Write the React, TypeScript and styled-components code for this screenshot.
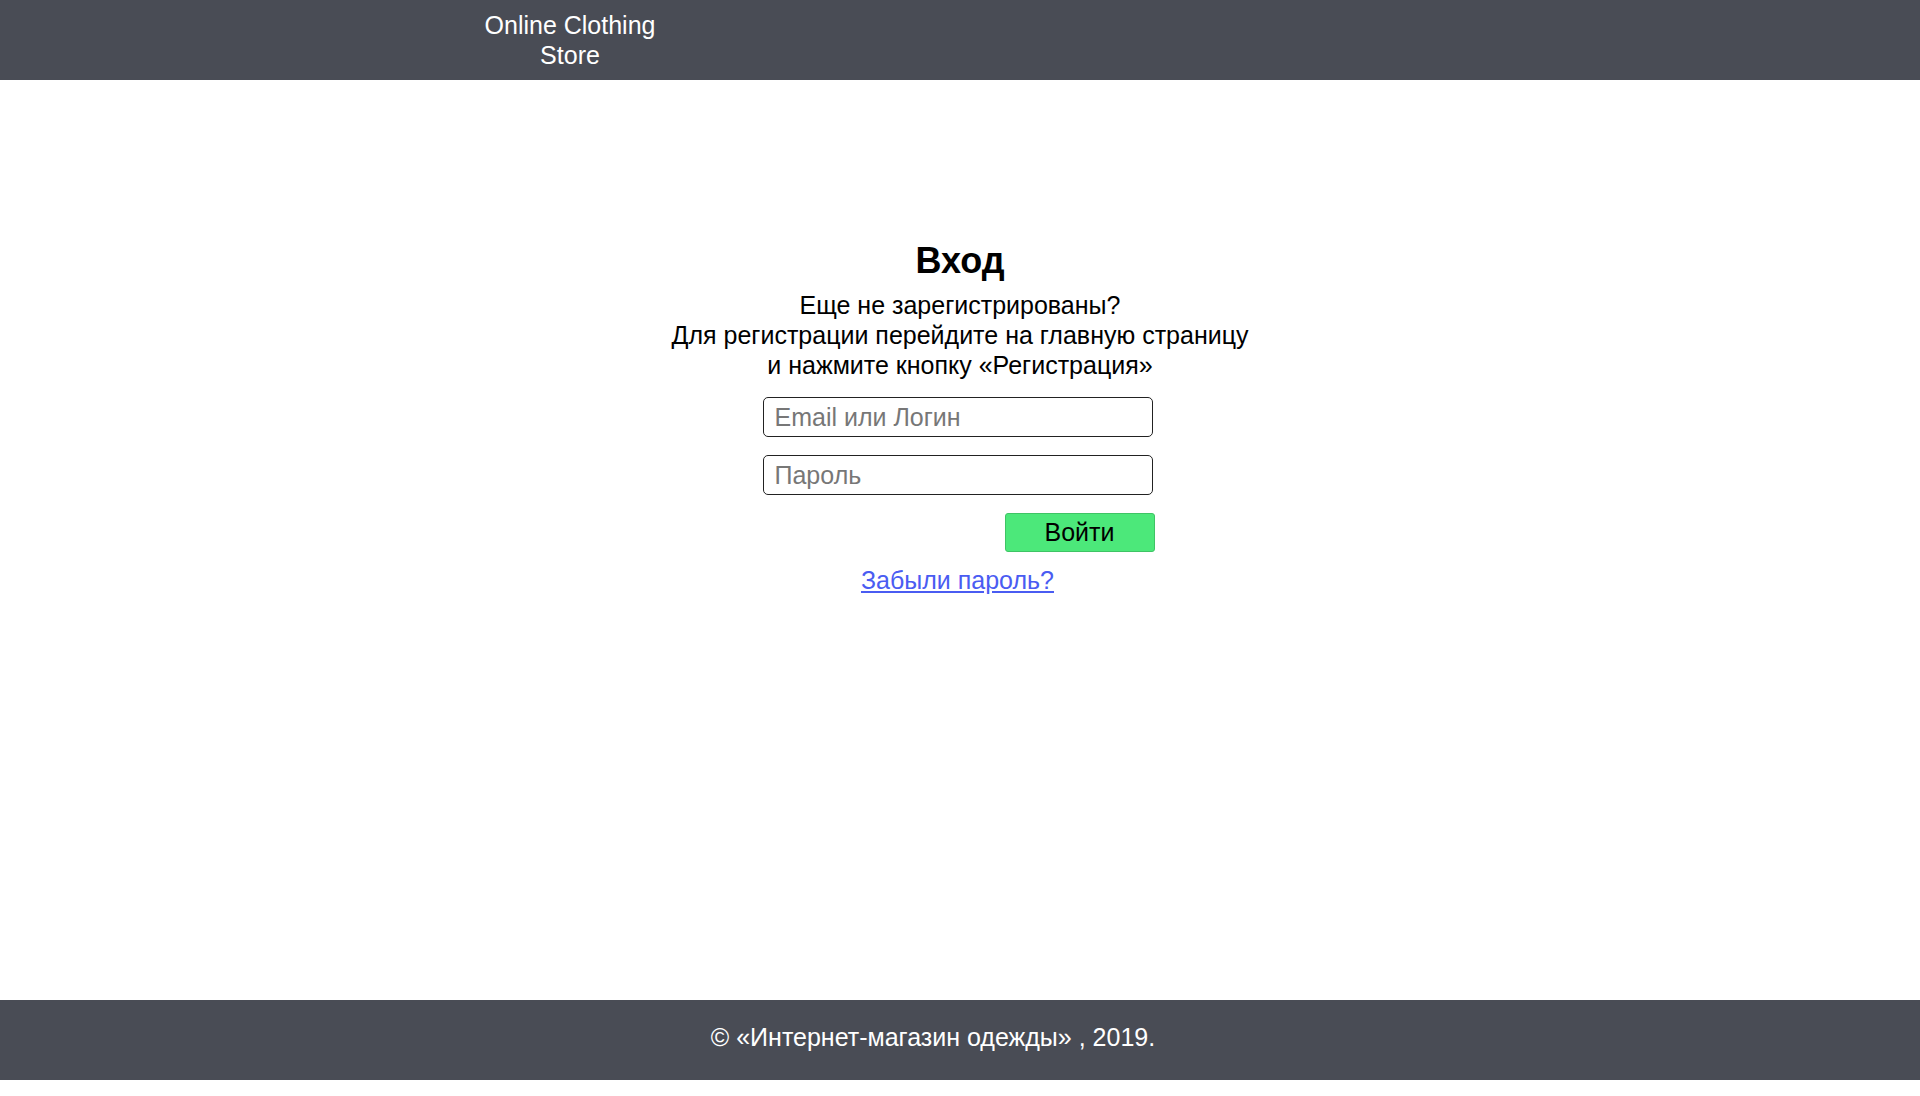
import styled, { createGlobalStyle } from 'styled-components';

const GlobalStyle = createGlobalStyle`
	html,
	body {
		margin: 0;
		padding: 0;
		background: #ffffff;
		font-family: 'Liberation Sans', Arial, sans-serif;
	}
`;

const Page = styled.div`
	display: flex;
	flex-direction: column;
	min-height: 1080px;
	margin-bottom: 16px;
`;

const Header = styled.header`
	display: flex;
	align-items: center;
	height: 80px;
	background: #494c55;
	padding-left: 470px;
	box-sizing: border-box;
`;

const Logo = styled.div`
	width: 200px;
	color: #ffffff;
	font-size: 25px;
	line-height: 30px;
	text-align: center;
`;

const Main = styled.main`
	flex: 1;
	display: flex;
	flex-direction: column;
	align-items: center;
	padding-top: 161px;
`;

const Title = styled.h2`
	margin: 0;
	font-size: 36px;
	line-height: 40px;
	font-weight: bold;
	color: #000000;
`;

const Hint = styled.p`
	margin: 9px 0 0;
	font-size: 25px;
	line-height: 30px;
	text-align: center;
	color: #000000;
`;

const Form = styled.form`
	display: flex;
	flex-direction: column;
	gap: 18px;
	width: 390px;
	margin: 17px 5px 0 0;
`;

const Field = styled.input`
	box-sizing: border-box;
	width: 100%;
	height: 40px;
	padding: 0 11px;
	border: 1px solid #222222;
	border-radius: 5px;
	font-family: 'Liberation Sans', Arial, sans-serif;
	font-size: 25px;
	color: #000000;
	outline: none;

	&::placeholder {
		color: #777777;
	}
`;

const Actions = styled.div`
	display: flex;
	justify-content: flex-end;
	margin-right: -2px;
`;

const SubmitButton = styled.button`
	width: 150px;
	height: 39px;
	background: #4ce87a;
	border: 1px solid #3fc465;
	border-radius: 3px;
	font-family: 'Liberation Sans', Arial, sans-serif;
	font-size: 25px;
	color: #000000;
	cursor: pointer;
`;

const ForgotLink = styled.a`
	margin: 13px 5px 0 0;
	font-size: 25px;
	line-height: 30px;
	color: #4a5cf2;
	text-decoration: underline;
`;

const Footer = styled.footer`
	display: flex;
	align-items: center;
	justify-content: center;
	height: 80px;
	box-sizing: border-box;
	padding: 0 54px 5px 0;
	background: #494c55;
	color: #ffffff;
	font-size: 25px;
`;

export default function App(): JSX.Element {
	return (
		<>
			<GlobalStyle />
			<Page>
				<Header>
					<Logo>
						Online Clothing
						<br />
						Store
					</Logo>
				</Header>
				<Main>
					<Title>Вход</Title>
					<Hint>
						Еще не зарегистрированы?
						<br />
						Для регистрации перейдите на главную страницу
						<br />
						и нажмите кнопку «Регистрация»
					</Hint>
					<Form onSubmit={(e) => e.preventDefault()}>
						<Field type="text" placeholder="Email или Логин" />
						<Field type="password" placeholder="Пароль" />
						<Actions>
							<SubmitButton type="submit">Войти</SubmitButton>
						</Actions>
					</Form>
					<ForgotLink href="#">Забыли пароль?</ForgotLink>
				</Main>
				<Footer>© «Интернет-магазин одежды» , 2019.</Footer>
			</Page>
		</>
	);
}
